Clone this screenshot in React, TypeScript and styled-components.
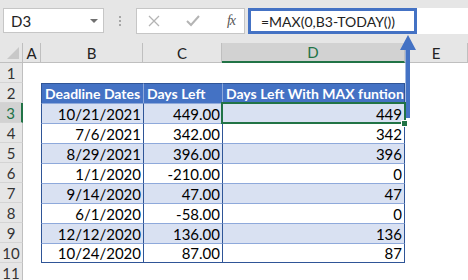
import styled, { createGlobalStyle, css } from "styled-components";

const GlobalStyle = createGlobalStyle`
  html, body {
    margin: 0;
    padding: 0;
    background: #ffffff;
  }
  #root {
    width: 468px;
    height: 280px;
    overflow: hidden;
  }
`;

const DARK = "#2f5597";
const LIGHT = "#8ea9db";
const GREEN = "#217346";

const Page = styled.div`
  position: relative;
  width: 468px;
  height: 280px;
  overflow: hidden;
  font-family: Lato, "Liberation Sans", sans-serif;
  background: #ffffff;
`;

const TopBar = styled.div`
  display: flex;
  align-items: flex-start;
  height: 43px;
  box-sizing: border-box;
  padding: 8px 0 0 3px;
  background: #e6e6e6;
`;

const NameBox = styled.div`
  display: flex;
  align-items: center;
  justify-content: space-between;
  width: 101px;
  height: 25px;
  box-sizing: border-box;
  padding: 0 5px 0 7px;
  background: #ffffff;
  border: 1px solid #c6c6c6;
  font-size: 15px;
  color: #222;
`;

const Caret = styled.span`
  width: 0;
  height: 0;
  border-left: 4px solid transparent;
  border-right: 4px solid transparent;
  border-top: 4px solid #707070;
`;

const Grip = styled.div`
  display: flex;
  flex-direction: column;
  align-items: center;
  justify-content: center;
  gap: 2px;
  width: 32px;
  height: 26px;
  span {
    width: 2px;
    height: 2px;
    background: #a6a6a6;
  }
`;

const FuncBox = styled.div`
  display: flex;
  align-items: center;
  justify-content: space-between;
  width: 109px;
  height: 26px;
  box-sizing: border-box;
  padding: 0 9px 0 11px;
  background: #ffffff;
  border: 1px solid #c6c6c6;
`;

const Fx = styled.span`
  font-family: "Liberation Serif", serif;
  font-style: italic;
  font-size: 14px;
  color: #555;
  letter-spacing: -1px;
`;

const FormulaBar = styled.div`
  display: flex;
  flex: 1;
  margin-left: 3px;
  height: 26px;
  background: #ffffff;
`;

const FormulaText = styled.div`
  display: flex;
  align-items: center;
  width: 169px;
  height: 26px;
  box-sizing: border-box;
  padding-left: 10px;
  border: 3px solid #4472c4;
  font-size: 14px;
  color: #222;
`;

const Sheet = styled.div`
  display: grid;
  grid-template-columns: 23px 18px 102px 79px 183px 63px;
  grid-auto-rows: 20px;
`;

const Corner = styled.div`
  position: relative;
  background: #e6e6e6;
  border-right: 1px solid #bfbfbf;
  border-bottom: 1px solid #bfbfbf;
  box-sizing: border-box;
  &::after {
    content: "";
    position: absolute;
    right: 3px;
    bottom: 3px;
    width: 0;
    height: 0;
    border-left: 12px solid transparent;
    border-bottom: 12px solid #c8c8c8;
  }
`;

const ColHead = styled.div<{ $active?: boolean }>`
  display: flex;
  align-items: center;
  justify-content: center;
  box-sizing: border-box;
  background: ${(p) => (p.$active ? "#d2d2d2" : "#e6e6e6")};
  border-right: 1px solid #bfbfbf;
  border-bottom: ${(p) => (p.$active ? `2px solid ${GREEN}` : "1px solid #bfbfbf")};
  font-size: 15px;
  color: ${(p) => (p.$active ? GREEN : "#222")};
`;

const RowHead = styled.div<{ $active?: boolean }>`
  display: flex;
  align-items: center;
  justify-content: center;
  box-sizing: border-box;
  background: ${(p) => (p.$active ? "#d2d2d2" : "#e6e6e6")};
  border-right: ${(p) => (p.$active ? `2px solid ${GREEN}` : "1px solid #bfbfbf")};
  border-bottom: 1px solid #d4d4d4;
  font-size: 15px;
  color: ${(p) => (p.$active ? GREEN : "#333")};
`;

const Blank = styled.div``;

const Cell = styled.div<{
  $header?: boolean;
  $band?: boolean;
  $first?: boolean;
  $last?: boolean;
  $bottom?: boolean;
  $selected?: boolean;
}>`
  position: relative;
  display: flex;
  align-items: center;
  justify-content: ${(p) => (p.$header ? "flex-start" : "flex-end")};
  box-sizing: border-box;
  padding: ${(p) => (p.$header ? "0 0 0 3px" : "0 2px 0 0")};
  font-size: ${(p) => (p.$header ? "14px" : "15px")};
  white-space: nowrap;
  color: ${(p) => (p.$header ? "#ffffff" : "#000")};
  font-weight: ${(p) => (p.$header ? 700 : 400)};
  background: ${(p) => (p.$header ? "#4472c4" : p.$band ? "#d9e1f2" : "#ffffff")};
  border-left: 1px solid ${(p) => (p.$header && !p.$first ? LIGHT : DARK)};
  border-top: 1px solid ${(p) => (p.$header ? DARK : LIGHT)};
  ${(p) =>
    p.$last &&
    css`
      border-right: 1px solid ${DARK};
    `}
  ${(p) =>
    p.$bottom &&
    css`
      border-bottom: 1px solid ${DARK};
    `}
  ${(p) =>
    p.$selected &&
    css`
      z-index: 1;
      outline: 2px solid ${GREEN};
      outline-offset: -1px;
      &::after {
        content: "";
        position: absolute;
        right: -4px;
        bottom: -4px;
        width: 5px;
        height: 5px;
        background: ${GREEN};
        border: 1px solid #ffffff;
      }
    `}
`;

const Arrow = styled.svg`
  position: absolute;
  left: 398px;
  top: 34px;
`;

const rows = [
  ["10/21/2021", "449.00", "449"],
  ["7/6/2021", "342.00", "342"],
  ["8/29/2021", "396.00", "396"],
  ["1/1/2020", "-210.00", "0"],
  ["9/14/2020", "47.00", "47"],
  ["6/1/2020", "-58.00", "0"],
  ["12/12/2020", "136.00", "136"],
  ["10/24/2020", "87.00", "87"],
];

const columns = ["A", "B", "C", "D", "E"];
const headers = ["Deadline Dates", "Days Left", "Days Left With MAX funtion"];

function RowContent({ index, values }: { index: number; values: string[] }) {
  const band = index % 2 === 0;
  const bottom = index === rows.length - 1;
  return (
    <>
      <RowHead $active={index === 0}>{index + 3}</RowHead>
      <Blank />
      {values.map((v, j) => (
        <Cell
          key={j}
          $band={band}
          $bottom={bottom}
          $last={j === 2}
          $selected={index === 0 && j === 2}
        >
          {v}
        </Cell>
      ))}
      <Blank />
    </>
  );
}

export default function App() {
  return (
    <Page>
      <GlobalStyle />
      <TopBar>
        <NameBox>
          D3
          <Caret />
        </NameBox>
        <Grip>
          <span />
          <span />
          <span />
        </Grip>
        <FuncBox>
          <svg width="12" height="12" viewBox="0 0 12 12">
            <path d="M1 1 L11 11 M11 1 L1 11" stroke="#b4b4b4" strokeWidth="1.3" fill="none" />
          </svg>
          <svg width="14" height="12" viewBox="0 0 14 12">
            <path d="M1 6 L5 10 L13 1" stroke="#b4b4b4" strokeWidth="2" fill="none" />
          </svg>
          <Fx>fx</Fx>
        </FuncBox>
        <FormulaBar>
          <FormulaText>=MAX(0,B3-TODAY())</FormulaText>
        </FormulaBar>
      </TopBar>

      <Sheet>
        <Corner />
        {columns.map((c) => (
          <ColHead key={c} $active={c === "D"}>
            {c}
          </ColHead>
        ))}

        <RowHead>1</RowHead>
        <Blank />
        <Blank />
        <Blank />
        <Blank />
        <Blank />

        <RowHead>2</RowHead>
        <Blank />
        {headers.map((h, i) => (
          <Cell key={h} $header $first={i === 0} $last={i === 2}>
            {h}
          </Cell>
        ))}
        <Blank />

        {rows.map((r, i) => (
          <RowContent key={i} index={i} values={r} />
        ))}

        <RowHead>11</RowHead>
      </Sheet>

      <Arrow width="20" height="86" viewBox="0 0 20 86">
        <rect x="7.5" y="14" width="4.5" height="70" fill="#4472c4" />
        <polygon points="10,1 2,16 18,16" fill="#4472c4" />
      </Arrow>
    </Page>
  );
}
